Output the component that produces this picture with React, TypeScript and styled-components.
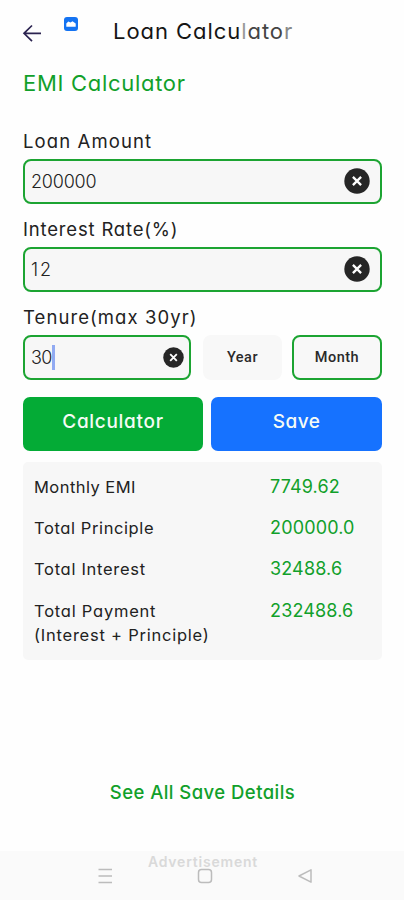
import React from "react";
import styled, { createGlobalStyle } from "styled-components";

const GlobalStyle = createGlobalStyle`
  *, *::before, *::after { box-sizing: border-box; }
  body { margin: 0; background: #fefefe; }
  button { border: 0; padding: 0; background: none; cursor: pointer; }
`;

const geometric = `font-family: Inter, "Noto Sans", sans-serif; font-feature-settings: "cv11" 1;`;

const Screen = styled.main`
  width: 404px;
  height: 900px;
  display: flex;
  flex-direction: column;
  overflow: hidden;
  color: #222;
  ${geometric}
`;

const Header = styled.header`
  height: 63px;
  flex: none;
  display: flex;
  align-items: flex-start;
  padding-left: 22px;
`;

const BackButton = styled.button`
  width: 20px;
  height: 20px;
  margin-top: 23px;
  svg { display: block; }
`;

const Badge = styled.svg`
  width: 14px;
  height: 14px;
  margin: 17px 0 0 22px;
`;

const Title = styled.h1`
  margin: 16px 0 0 35px;
  font-size: 22px;
  line-height: 30px;
  font-weight: 400;
  letter-spacing: 0.95px;
  white-space: nowrap;
  color: #151515;
`;

const Faded = styled.span<{ $tone: string }>`
  color: ${(p) => p.$tone};
`;

const Content = styled.section`
  flex: 1;
  display: flex;
  flex-direction: column;
  padding: 0 22px 0 23px;
`;

const Heading = styled.h2`
  margin: 5px 0 44px;
  font-size: 22px;
  line-height: 30px;
  font-weight: 400;
  letter-spacing: 0.7px;
  color: #11a02a;
`;

const Field = styled.div`
  height: 88px;
  flex: none;
`;

const Label = styled.label<{ $track: number }>`
  display: block;
  height: 24px;
  margin-top: -13px;
  margin-bottom: 6px;
  font-size: 18.5px;
  line-height: 24px;
  letter-spacing: ${(p) => p.$track}px;
  white-space: nowrap;
`;

const InputBox = styled.div<{ $width?: number }>`
  width: ${(p) => (p.$width ? `${p.$width}px` : "100%")};
  height: 45px;
  display: flex;
  align-items: center;
  padding: 0 ${(p) => (p.$width ? 5 : 10)}px 0 6px;
  border: 2px solid #1ca432;
  border-radius: 8px;
  background: #f7f7f7;
`;

const Value = styled.span<{ $track: number }>`
  margin-top: 1px;
  font-size: 18px;
  line-height: 24px;
  font-weight: 300;
  letter-spacing: ${(p) => p.$track}px;
  color: #222;
`;

const Caret = styled.i`
  width: 3px;
  height: 25px;
  margin-bottom: 1px;
  background: #91aaf2;
`;

const ClearButton = styled.button<{ $size: number }>`
  width: ${(p) => p.$size}px;
  height: ${(p) => p.$size}px;
  margin-left: auto;
  margin-bottom: 1px;
  svg { display: block; width: 100%; height: 100%; }
`;

const TenureRow = styled.div`
  display: flex;
`;

const UnitButton = styled.button<{ $active?: boolean }>`
  width: ${(p) => (p.$active ? 90 : 79)}px;
  height: 45px;
  padding-top: 1px;
  margin-left: ${(p) => (p.$active ? 10 : 12)}px;
  border: 2px solid ${(p) => (p.$active ? "#1ca432" : "#f8f8f8")};
  border-radius: 8px;
  background: #f8f8f8;
  font: 500 14.5px/20px Roboto, sans-serif;
  letter-spacing: 0.5px;
  color: #2a2a2a;
`;

const Actions = styled.div`
  display: grid;
  grid-template-columns: 180px 171px;
  column-gap: 8px;
  margin-top: -9px;
`;

const ActionButton = styled.button<{ $color: string; $track: number }>`
  height: 54px;
  padding-bottom: 5px;
  border-radius: 7px;
  background: ${(p) => p.$color};
  ${geometric}
  font-size: 19px;
  font-weight: 500;
  letter-spacing: ${(p) => p.$track}px;
  color: #f5fbf5;
`;

const Results = styled.dl`
  height: 198px;
  margin: 11px 0 0;
  padding: 13px 12px 0 11px;
  border-radius: 5px;
  background: #f7f7f7;
`;

const ResultRow = styled.div`
  min-height: 41.2px;
  display: grid;
  grid-template-columns: 236px 1fr;
`;

const ResultName = styled.dt<{ $track: number }>`
  font-size: 16.5px;
  line-height: 24px;
  letter-spacing: ${(p) => p.$track}px;
  white-space: nowrap;
`;

const ResultValue = styled.dd`
  margin: 0;
  font-size: 18px;
  line-height: 24px;
  letter-spacing: 0.15px;
  color: #11a02a;
`;

const DetailsLink = styled.button`
  margin: 119px auto 0;
  ${geometric}
  font-size: 18.5px;
  line-height: 26px;
  font-weight: 500;
  letter-spacing: 0.45px;
  color: #11a02a;
  white-space: nowrap;
`;

const Footer = styled.footer`
  height: 49px;
  flex: none;
  padding-top: 4px;
  background: #fafafa;
`;

const AdLabel = styled.div`
  height: 13px;
  padding-left: 2px;
  text-align: center;
  font-size: 14px;
  line-height: 14px;
  font-weight: 600;
  letter-spacing: 0.8px;
  color: #d9d9d9;
`;

const NavBar = styled.nav`
  display: flex;
  justify-content: space-between;
  padding: 0 91px 0 97px;
  svg { display: block; }
`;

const ClearIcon = ({ size }: { size: number }) => (
  <ClearButton $size={size} aria-label="Clear">
    <svg viewBox="0 0 26 26">
      <circle cx="13" cy="13" r="12.7" fill="#262626" />
      <path d="M8.9 8.9l8.2 8.2M17.1 8.9l-8.2 8.2" stroke="#fff" strokeWidth="2.3" />
    </svg>
  </ClearButton>
);

const results = [
  { name: "Monthly EMI", track: 0.45, value: "7749.62" },
  { name: "Total Principle", track: 0.6, value: "200000.0" },
  { name: "Total Interest", track: 0.7, value: "32488.6" },
  { name: "Total Payment", track: 0.77, note: "(Interest + Principle)", value: "232488.6" },
];

export default function App() {
  return (
    <>
      <GlobalStyle />
      <Screen>
        <Header>
          <BackButton aria-label="Back">
            <svg width="20" height="20" viewBox="0 0 20 20" fill="none" stroke="#2b2350" strokeWidth="1.7">
              <path d="M19 10.3H2M10 2.5L2 10.3L10 18.2" />
            </svg>
          </BackButton>
          <Badge viewBox="0 0 14 14">
            <rect width="14" height="14" rx="3" fill="#1473f2" />
            <path d="M2.3 9.7V6.4l2-1.8 2.2.8 2-1.2 3.2 2.4v3.1z" fill="#fff" />
          </Badge>
          <Title>
            Loan Calcu<Faded $tone="#999">l</Faded>
            <Faded $tone="#444">ato</Faded>
            <Faded $tone="#888">r</Faded>
          </Title>
        </Header>
        <Content>
          <Heading>EMI Calculator</Heading>
          <Field>
            <Label $track={1.1}>Loan Amount</Label>
            <InputBox>
              <Value $track={-0.2}>200000</Value>
              <ClearIcon size={26} />
            </InputBox>
          </Field>
          <Field>
            <Label $track={0.82}>Interest Rate(%)</Label>
            <InputBox>
              <Value $track={2}>12</Value>
              <ClearIcon size={26} />
            </InputBox>
          </Field>
          <Field>
            <Label $track={1.07}>Tenure(max 30yr)</Label>
            <TenureRow>
              <InputBox $width={168}>
                <Value $track={-0.6}>30</Value>
                <Caret />
                <ClearIcon size={21} />
              </InputBox>
              <UnitButton>Year</UnitButton>
              <UnitButton $active>Month</UnitButton>
            </TenureRow>
          </Field>
          <Actions>
            <ActionButton $color="#04ab36" $track={0.7}>Calculator</ActionButton>
            <ActionButton $color="#1672ff" $track={0.5}>Save</ActionButton>
          </Actions>
          <Results>
            {results.map((r) => (
              <ResultRow key={r.name}>
                <ResultName $track={r.track}>
                  {r.name}
                  {r.note && (
                    <>
                      <br />
                      {r.note}
                    </>
                  )}
                </ResultName>
                <ResultValue>{r.value}</ResultValue>
              </ResultRow>
            ))}
          </Results>
          <DetailsLink>See All Save Details</DetailsLink>
        </Content>
        <Footer>
          <AdLabel>Advertisement</AdLabel>
          <NavBar>
            <svg width="16" height="16" viewBox="0 0 16 16" stroke="#bcbcbc" strokeWidth="1.5">
              <path d="M1.5 1.5h13.5M1.5 8h13.5M1.5 14.5h13.5" />
            </svg>
            <svg width="16" height="16" viewBox="0 0 16 16" fill="none" stroke="#bcbcbc" strokeWidth="1.5">
              <rect x="1.5" y="1.5" width="13" height="13" rx="3" />
            </svg>
            <svg width="16" height="16" viewBox="0 0 16 16" fill="none" stroke="#bcbcbc" strokeWidth="1.5" strokeLinejoin="round">
              <path d="M14 1.8L2 8l12 6.2z" />
            </svg>
          </NavBar>
        </Footer>
      </Screen>
    </>
  );
}
